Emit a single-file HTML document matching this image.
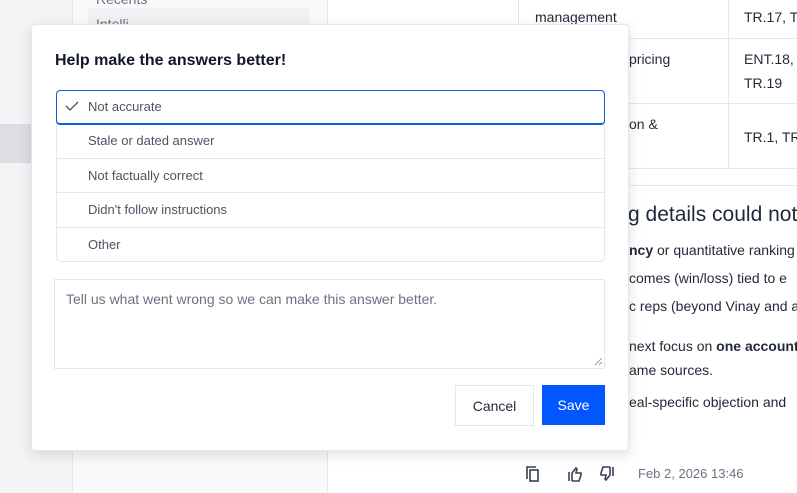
<!DOCTYPE html>
<html><head><style>
*{box-sizing:border-box;margin:0;padding:0}
body{width:797px;height:493px;overflow:hidden;position:relative;background:#fff;font-family:"Liberation Sans",sans-serif}
.a{position:absolute;white-space:nowrap}
.t{font-size:14px;color:#1f2937}
</style></head><body>
<div class="a" style="left:0;top:0;width:72px;height:493px;background:#f3f4f6"></div>
<div class="a" style="left:0;top:124px;width:31px;height:39px;background:#dcdee2"></div>
<div class="a" style="left:72px;top:0;width:256px;height:493px;background:#f9fafb;border-left:1px solid #e5e7eb;border-right:1px solid #e5e7eb"></div>
<div class="a" style="left:88px;top:8px;width:222px;height:30px;background:#f0f1f3"></div>
<div class="a t" style="left:96px;top:-9px;color:#6b7280">Recents</div>
<div class="a t" style="left:96px;top:16px;color:#6b7280">Intelli</div>

<div class="a" style="left:518px;top:0;width:1px;height:168px;background:#e5e7eb"></div>
<div class="a" style="left:728px;top:0;width:1px;height:168px;background:#e5e7eb"></div>
<div class="a" style="left:518px;top:38px;width:279px;height:1px;background:#e5e7eb"></div>
<div class="a" style="left:518px;top:103px;width:279px;height:1px;background:#e5e7eb"></div>
<div class="a" style="left:518px;top:168px;width:279px;height:1px;background:#e5e7eb"></div>
<div class="a" style="left:628px;top:185px;width:169px;height:1px;background:#e5e7eb"></div>
<div class="a t" style="left:535px;top:9px">management</div>
<div class="a t" style="left:744px;top:9px">TR.17, TR</div>
<div class="a t" style="left:629px;top:51px">pricing</div>
<div class="a t" style="left:744px;top:51px">ENT.18, T</div>
<div class="a t" style="left:744px;top:75px">TR.19</div>
<div class="a t" style="left:629px;top:116px">on &amp;</div>
<div class="a t" style="left:744px;top:129px">TR.1, TR.1</div>
<div class="a" style="left:628px;top:203px;font-size:21px;color:#1f2937">g details could not</div>
<div class="a t" style="left:629px;top:242px"><b>ncy</b> or quantitative ranking</div>
<div class="a t" style="left:629px;top:270px">comes (win/loss) tied to e</div>
<div class="a t" style="left:629px;top:298px">c reps (beyond Vinay and a</div>
<div class="a t" style="left:629px;top:338px">next focus on <b>one account</b></div>
<div class="a t" style="left:629px;top:362px">ame sources.</div>
<div class="a t" style="left:629px;top:394px">eal-specific objection and</div>
<svg class="a" style="left:525px;top:465px" width="120" height="20" viewBox="0 0 120 20">
<g fill="none" stroke="#374151" stroke-width="1.6">
<path d="M2 14V2h9"/><rect x="5" y="5" width="8" height="11"/>
<path d="M44 7v9M47 16h7l2-6v-2h-5l1-4-1-1-4 5v8"/>
<path d="M88 11V2M85 2h-7l-2 6v2h5l-1 4 1 1 4-5V2"/>
</g></svg>
<div class="a" style="left:638px;top:466px;font-size:13px;color:#6b7280">Feb 2, 2026 13:46</div>

<div class="a" style="left:31px;top:24px;width:598px;height:427px;background:#fff;border:1px solid #e5e7eb;border-radius:4px;box-shadow:0 4px 14px rgba(0,0,0,.12)"></div>
<div class="a" style="left:55px;top:52px;font-size:16px;font-weight:bold;color:#111827">Help make the answers better!</div>
<div class="a" style="left:56px;top:90px;width:549px;height:172px;border:1px solid #e5e7eb;border-radius:5px"></div>
<div class="a" style="left:56px;top:158px;width:549px;height:1px;background:#e5e7eb"></div>
<div class="a" style="left:56px;top:192px;width:549px;height:1px;background:#e5e7eb"></div>
<div class="a" style="left:56px;top:227px;width:549px;height:1px;background:#e5e7eb"></div>
<div class="a" style="left:56px;top:90px;width:549px;height:35px;border:1.5px solid #0b5fd6;border-bottom-width:2px;border-radius:4px"></div>
<svg class="a" style="left:65px;top:100px" width="14" height="12"><path d="M1 6l4 4 8-8" fill="none" stroke="#4b5563" stroke-width="1.3"/></svg>
<div class="a" style="left:88px;top:99px;font-size:13px;color:#4b5563">Not accurate</div>
<div class="a" style="left:88px;top:133px;font-size:13px;color:#4b5563">Stale or dated answer</div>
<div class="a" style="left:88px;top:168px;font-size:13px;color:#4b5563">Not factually correct</div>
<div class="a" style="left:88px;top:202px;font-size:13px;color:#4b5563">Didn't follow instructions</div>
<div class="a" style="left:88px;top:237px;font-size:13px;color:#4b5563">Other</div>
<div class="a" style="left:54px;top:279px;width:551px;height:90px;border:1px solid #e5e7eb"></div>
<div class="a" style="left:66px;top:291px;font-size:14px;color:#6b7280">Tell us what went wrong so we can make this answer better.</div>
<svg class="a" style="left:594px;top:357px" width="9" height="9"><path d="M1 8L8 1M5 8L8 5" stroke="#9ca3af"/></svg>
<div class="a" style="left:455px;top:385px;width:79px;height:41px;border:1px solid #e5e7eb;font-size:14px;color:#1f2937;text-align:center;line-height:40px">Cancel</div>
<div class="a" style="left:542px;top:385px;width:63px;height:40px;background:#0057ff;font-size:14px;color:#fff;text-align:center;line-height:40px">Save</div>
</body></html>
